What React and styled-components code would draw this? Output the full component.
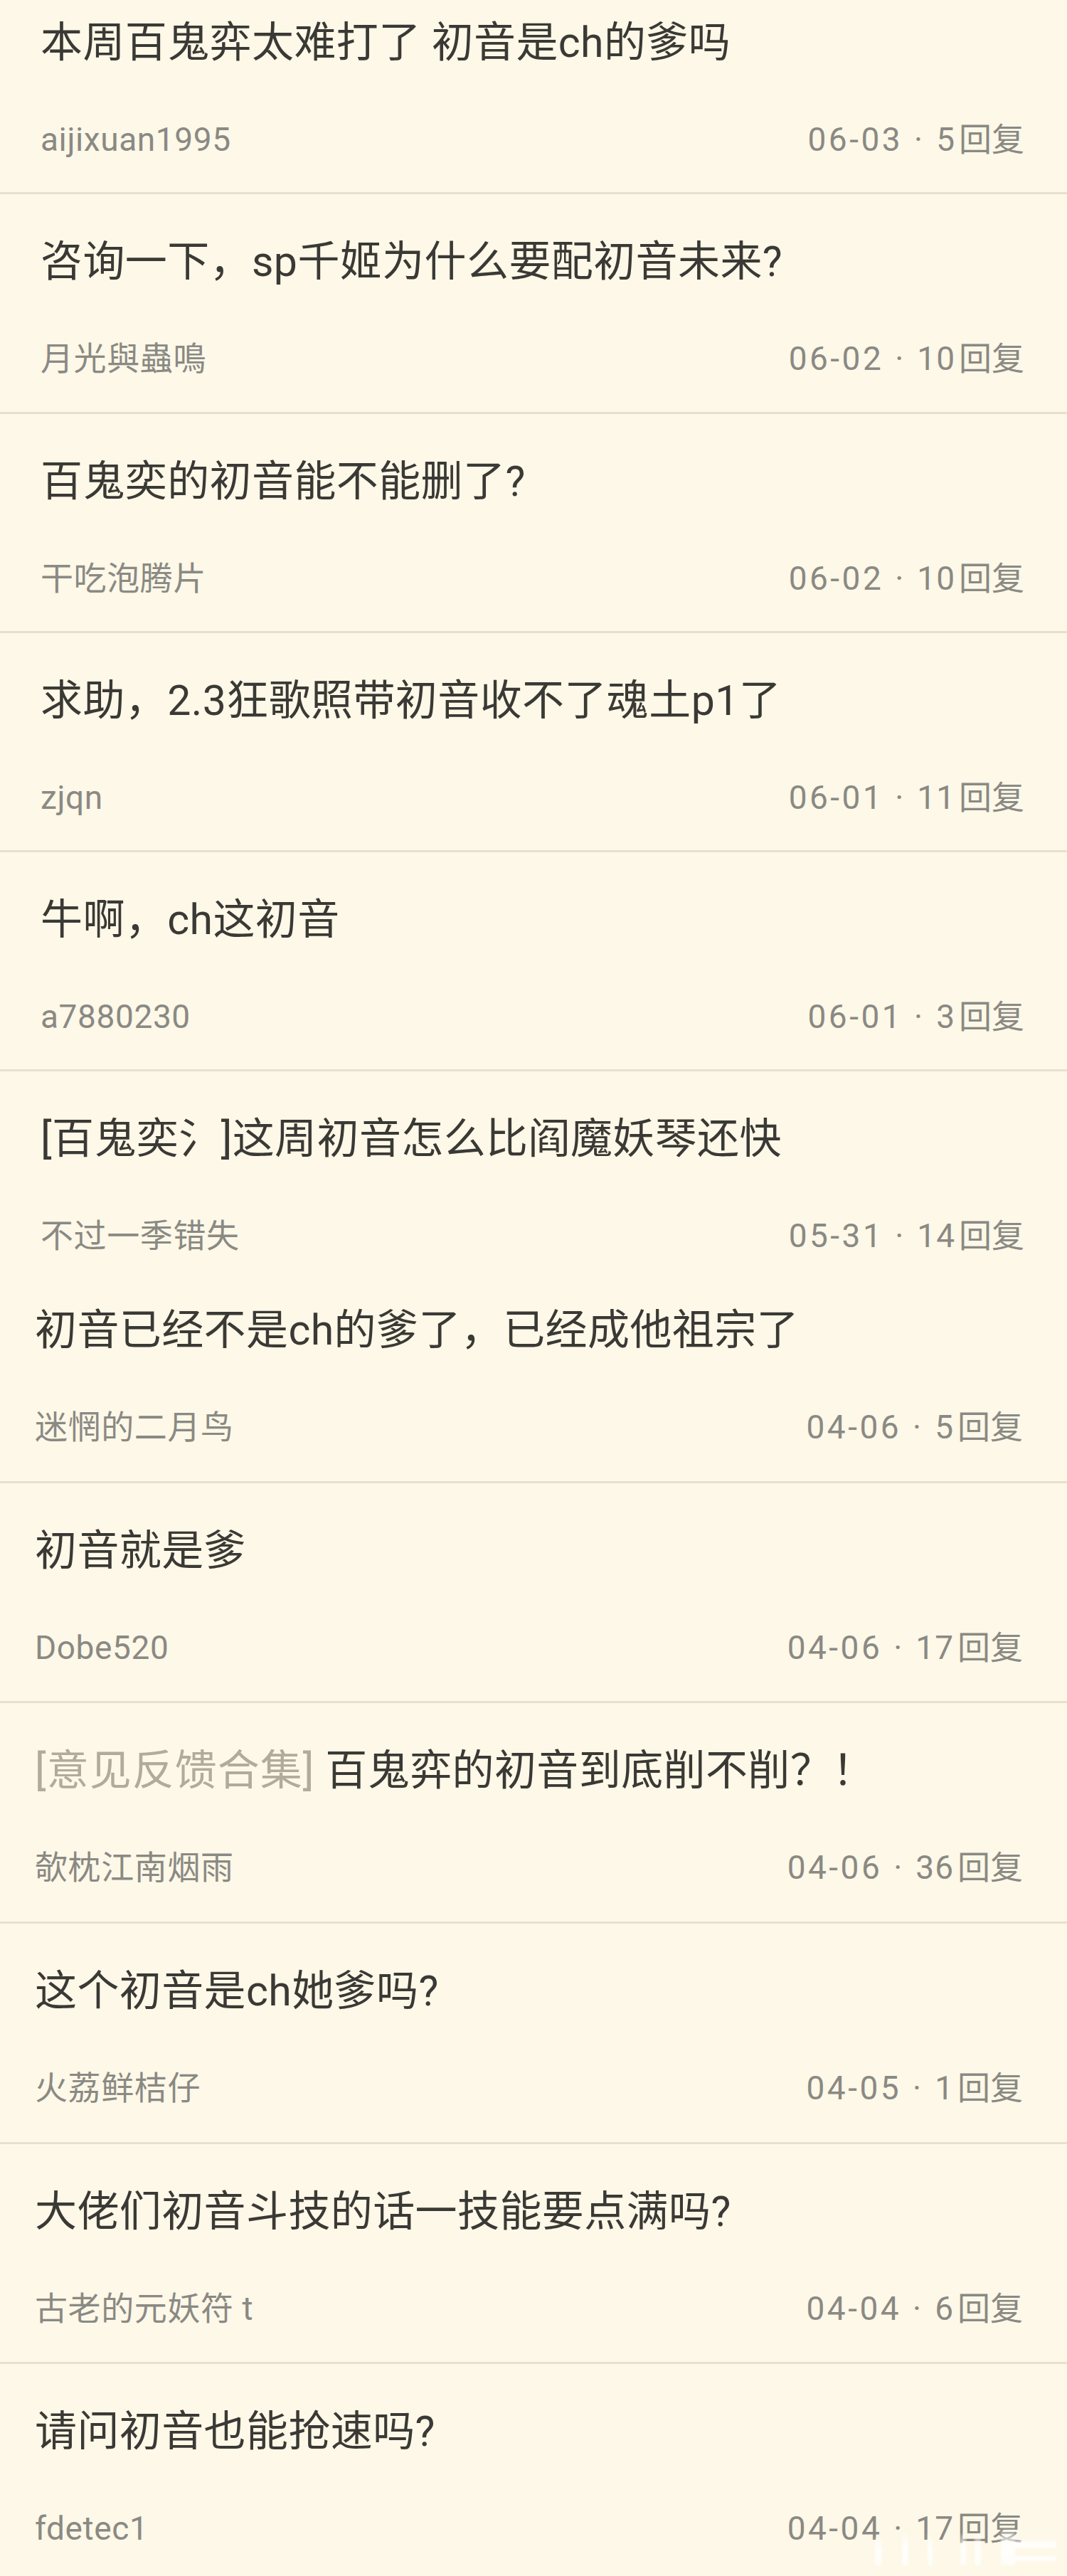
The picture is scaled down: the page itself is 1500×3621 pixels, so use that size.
import React from 'react';
import styled, {createGlobalStyle} from 'styled-components';

const GlobalStyle = createGlobalStyle`
    html, body {
      margin: 0;
      padding: 0;
      background: #fdf8e7;
    }
`;

const topics = [
    {title: '本周百鬼弈太难打了 初音是ch的爹吗', author: 'aijixuan1995', date: '06-03', replies: 5},
    {title: '咨询一下，sp千姬为什么要配初音未来?', author: '月光與蟲鳴', date: '06-02', replies: 10},
    {title: '百鬼奕的初音能不能删了?', author: '干吃泡腾片', date: '06-02', replies: 10},
    {title: '求助，2.3狂歌照带初音收不了魂土p1了', author: 'zjqn', date: '06-01', replies: 11},
    {title: '牛啊，ch这初音', author: 'a7880230', date: '06-01', replies: 3},
    {title: '[百鬼奕氵]这周初音怎么比阎魔妖琴还快', author: '不过一季错失', date: '05-31', replies: 14},
];

const olderTopics = [
    {title: '初音已经不是ch的爹了，已经成他祖宗了', author: '迷惘的二月鸟', date: '04-06', replies: 5},
    {title: '初音就是爹', author: 'Dobe520', date: '04-06', replies: 17},
    {tag: '[意见反馈合集]', title: '百鬼弈的初音到底削不削？！', author: '欹枕江南烟雨', date: '04-06', replies: 36},
    {title: '这个初音是ch她爹吗?', author: '火荔鲜桔仔', date: '04-05', replies: 1},
    {title: '大佬们初音斗技的话一技能要点满吗?', author: '古老的元妖符 t', date: '04-04', replies: 6},
    {title: '请问初音也能抢速吗?', author: 'fdetec1', date: '04-04', replies: 17},
];

const Page = styled.div`
    position: relative;
    width: 1500px;
    height: 3621px;
    overflow: hidden;
    background: #fdf8e7;
    font-family: "Roboto", "Noto Sans CJK SC", sans-serif;
`;

const Section = styled.section`
    height: ${p => p.$height}px;
    overflow: hidden;
`;

const List = styled.div`
    display: flex;
    flex-direction: column;
    margin-top: ${p => p.$offset}px;
`;

const Row = styled.div`
    box-sizing: border-box;
    flex: 0 0 auto;
    height: ${p => p.$pitch}px;
    display: flex;
    flex-direction: column;
    padding: 60px ${p => p.$right}px 0 ${p => p.$left}px;
    border-bottom: 3px solid #e6e0cf;
`;

const Title = styled.div`
    font-size: 59px;
    line-height: 70px;
    letter-spacing: 0.4px;
    color: #3a3935;
    white-space: nowrap;
`;

const Tag = styled.span`
    color: #b2ab9b;
    letter-spacing: 1px;
`;

const Meta = styled.div`
    display: flex;
    justify-content: space-between;
    margin-top: 73px;
    font-size: 46px;
    line-height: 56px;
    color: #8a8984;
`;

const Author = styled.span`
    letter-spacing: 0.6px;
`;

const Stats = styled.span`
    display: flex;
    align-items: baseline;
`;

const DateText = styled.span`
    letter-spacing: 3.5px;
`;

const Dot = styled.span`
    margin: 0 19px 0 16px;
`;

const Count = styled.span`
    letter-spacing: 1px;
    margin-right: 5px;
`;

const Watermark = styled.svg`
    position: absolute;
    left: 1222px;
    top: 3552px;
    pointer-events: none;
`;

const Topic = ({topic, pitch, left, right}) => (
    <Row $pitch={pitch} $left={left} $right={right}>
        <Title>
            {topic.tag && <Tag>{topic.tag}</Tag>}
            {topic.tag ? ' ' : ''}{topic.title}
        </Title>
        <Meta>
            <Author>{topic.author}</Author>
            <Stats>
                <DateText>{topic.date}</DateText>
                <Dot>·</Dot>
                <Count>{topic.replies}</Count>回复
            </Stats>
        </Meta>
    </Row>
);

export default function App() {
    return (
        <Page>
            <GlobalStyle/>
            <Section $height={1775}>
                <List $offset={-35}>
                    {topics.map(t => <Topic key={t.title} topic={t} pitch={308.25} left={57} right={60}/>)}
                </List>
            </Section>
            <Section $height={1846}>
                <List $offset={0}>
                    {olderTopics.map(t => <Topic key={t.title} topic={t} pitch={309.7} left={49} right={62}/>)}
                </List>
            </Section>
            <Watermark width="278" height="60" viewBox="0 0 278 60">
                <defs>
                    <filter id="wm-blur">
                        <feGaussianBlur stdDeviation="1.6"/>
                    </filter>
                    <linearGradient id="wm-fade" x1="0" y1="0" x2="0" y2="1">
                        <stop offset="0" stopColor="#ffffff" stopOpacity="0.2"/>
                        <stop offset="0.5" stopColor="#ffffff" stopOpacity="0.9"/>
                        <stop offset="1" stopColor="#ffffff" stopOpacity="0.7"/>
                    </linearGradient>
                </defs>
                <g filter="url(#wm-blur)" fill="url(#wm-fade)">
                    <rect x="8" y="14" width="10" height="40"/>
                    <rect x="46" y="8" width="9" height="46"/>
                    <rect x="82" y="10" width="7" height="44"/>
                    <rect x="128" y="10" width="8" height="44"/>
                    <rect x="148" y="10" width="9" height="44"/>
                    <rect x="185" y="4" width="20" height="50"/>
                    <rect x="205" y="18" width="58" height="12"/>
                    <rect x="205" y="40" width="58" height="8"/>
                </g>
            </Watermark>
        </Page>
    );
}
